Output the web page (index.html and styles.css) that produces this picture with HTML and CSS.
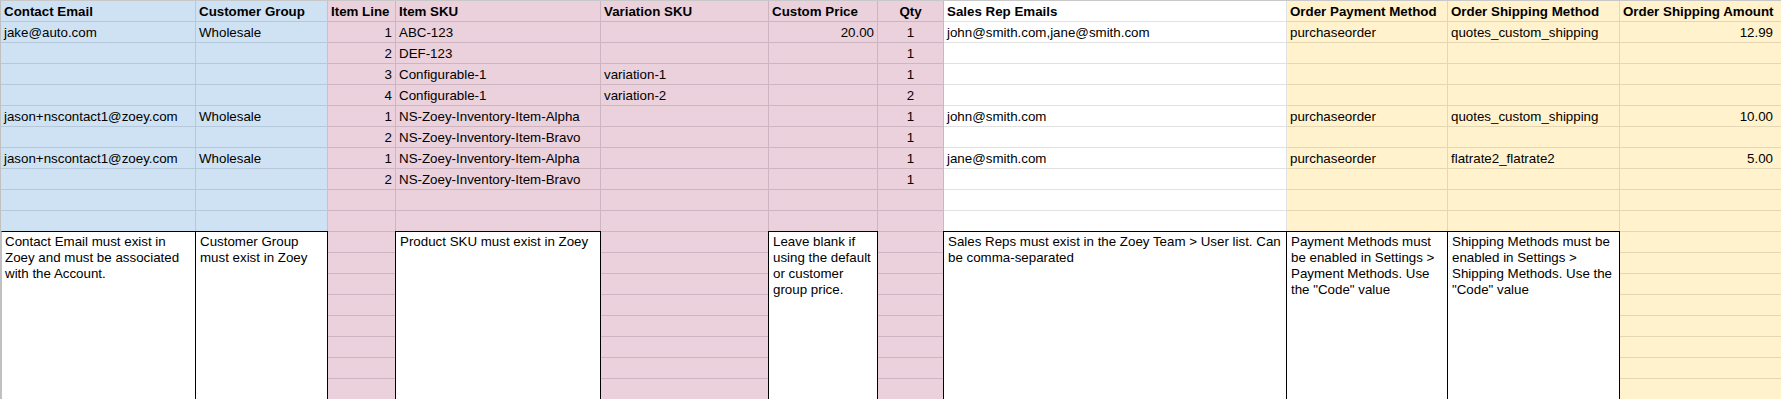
FILE: index.html
```html
<!DOCTYPE html>
<html>
<head>
<meta charset="utf-8">
<title>Order Import Template</title>
<link rel="stylesheet" href="styles.css">
</head>
<body>
<div class="sheet">
  <!-- header -->
  <div class="c b h">Contact Email</div>
  <div class="c b h">Customer Group</div>
  <div class="c p h">Item Line</div>
  <div class="c p h">Item SKU</div>
  <div class="c p h">Variation SKU</div>
  <div class="c p h">Custom Price</div>
  <div class="c p h ctr">Qty</div>
  <div class="c w h">Sales Rep Emails</div>
  <div class="c y h">Order Payment Method</div>
  <div class="c y h">Order Shipping Method</div>
  <div class="c y h">Order Shipping Amount</div>

  <!-- row 1 -->
  <div class="c b">jake@auto.com</div>
  <div class="c b">Wholesale</div>
  <div class="c p r">1</div>
  <div class="c p">ABC-123</div>
  <div class="c p"></div>
  <div class="c p r">20.00</div>
  <div class="c p ctr">1</div>
  <div class="c w">john@smith.com,jane@smith.com</div>
  <div class="c y">purchaseorder</div>
  <div class="c y">quotes_custom_shipping</div>
  <div class="c y r last">12.99</div>

  <!-- row 2 -->
  <div class="c b"></div>
  <div class="c b"></div>
  <div class="c p r">2</div>
  <div class="c p">DEF-123</div>
  <div class="c p"></div>
  <div class="c p"></div>
  <div class="c p ctr">1</div>
  <div class="c w"></div>
  <div class="c y"></div>
  <div class="c y"></div>
  <div class="c y"></div>

  <!-- row 3 -->
  <div class="c b"></div>
  <div class="c b"></div>
  <div class="c p r">3</div>
  <div class="c p">Configurable-1</div>
  <div class="c p">variation-1</div>
  <div class="c p"></div>
  <div class="c p ctr">1</div>
  <div class="c w"></div>
  <div class="c y"></div>
  <div class="c y"></div>
  <div class="c y"></div>

  <!-- row 4 -->
  <div class="c b"></div>
  <div class="c b"></div>
  <div class="c p r">4</div>
  <div class="c p">Configurable-1</div>
  <div class="c p">variation-2</div>
  <div class="c p"></div>
  <div class="c p ctr">2</div>
  <div class="c w"></div>
  <div class="c y"></div>
  <div class="c y"></div>
  <div class="c y"></div>

  <!-- row 5 -->
  <div class="c b">jason+nscontact1@zoey.com</div>
  <div class="c b">Wholesale</div>
  <div class="c p r">1</div>
  <div class="c p">NS-Zoey-Inventory-Item-Alpha</div>
  <div class="c p"></div>
  <div class="c p"></div>
  <div class="c p ctr">1</div>
  <div class="c w">john@smith.com</div>
  <div class="c y">purchaseorder</div>
  <div class="c y">quotes_custom_shipping</div>
  <div class="c y r last">10.00</div>

  <!-- row 6 -->
  <div class="c b"></div>
  <div class="c b"></div>
  <div class="c p r">2</div>
  <div class="c p">NS-Zoey-Inventory-Item-Bravo</div>
  <div class="c p"></div>
  <div class="c p"></div>
  <div class="c p ctr">1</div>
  <div class="c w"></div>
  <div class="c y"></div>
  <div class="c y"></div>
  <div class="c y"></div>

  <!-- row 7 -->
  <div class="c b">jason+nscontact1@zoey.com</div>
  <div class="c b">Wholesale</div>
  <div class="c p r">1</div>
  <div class="c p">NS-Zoey-Inventory-Item-Alpha</div>
  <div class="c p"></div>
  <div class="c p"></div>
  <div class="c p ctr">1</div>
  <div class="c w">jane@smith.com</div>
  <div class="c y">purchaseorder</div>
  <div class="c y">flatrate2_flatrate2</div>
  <div class="c y r last">5.00</div>

  <!-- row 8 -->
  <div class="c b"></div>
  <div class="c b"></div>
  <div class="c p r">2</div>
  <div class="c p">NS-Zoey-Inventory-Item-Bravo</div>
  <div class="c p"></div>
  <div class="c p"></div>
  <div class="c p ctr">1</div>
  <div class="c w"></div>
  <div class="c y"></div>
  <div class="c y"></div>
  <div class="c y"></div>

  <!-- row 9 -->
  <div class="c b"></div>
  <div class="c b"></div>
  <div class="c p"></div>
  <div class="c p"></div>
  <div class="c p"></div>
  <div class="c p"></div>
  <div class="c p"></div>
  <div class="c w"></div>
  <div class="c y"></div>
  <div class="c y"></div>
  <div class="c y"></div>

  <!-- row 10 -->
  <div class="c b"></div>
  <div class="c b"></div>
  <div class="c p"></div>
  <div class="c p"></div>
  <div class="c p"></div>
  <div class="c p"></div>
  <div class="c p"></div>
  <div class="c w"></div>
  <div class="c y"></div>
  <div class="c y"></div>
  <div class="c y"></div>

  <!-- notes (merged cells) -->
  <div class="note note-a first">Contact Email must exist in Zoey and must be associated with the Account.</div>
  <div class="note note-b">Customer Group must exist in Zoey</div>
  <div class="note note-d">Product SKU must exist in Zoey</div>
  <div class="note note-f">Leave blank if using the default or customer group price.</div>
  <div class="note note-h">Sales Reps must exist in the Zoey Team &gt; User list. Can be comma-separated</div>
  <div class="note note-i">Payment Methods must be enabled in Settings &gt; Payment Methods. Use the "Code" value</div>
  <div class="note note-j">Shipping Methods must be enabled in Settings &gt; Shipping Methods. Use the "Code" value</div>

  <!-- filler cells in the notes area: Item Line, Variation SKU, Qty, Amount -->
  <div class="c p"></div><div class="c p"></div><div class="c p"></div><div class="c y"></div>
  <div class="c p"></div><div class="c p"></div><div class="c p"></div><div class="c y"></div>
  <div class="c p"></div><div class="c p"></div><div class="c p"></div><div class="c y"></div>
  <div class="c p"></div><div class="c p"></div><div class="c p"></div><div class="c y"></div>
  <div class="c p"></div><div class="c p"></div><div class="c p"></div><div class="c y"></div>
  <div class="c p"></div><div class="c p"></div><div class="c p"></div><div class="c y"></div>
  <div class="c p"></div><div class="c p"></div><div class="c p"></div><div class="c y"></div>
  <div class="c p"></div><div class="c p"></div><div class="c p"></div><div class="c y"></div>
</div>
</body>
</html>
```

FILE: styles.css
```css
html, body {
  margin: 0;
  padding: 0;
  background: #ffffff;
  overflow: hidden;
}

body {
  width: 1781px;
  height: 399px;
  font-family: "Liberation Sans", Arial, sans-serif;
  font-size: 13.333px;
  color: #000000;
}

.sheet {
  display: grid;
  grid-template-columns: 195px 132px 68px 205px 168px 109px 66px 343px 161px 172px 165px;
  grid-auto-rows: 21px;
  border-top: 1px solid #c8c8c8;
  border-left: 1px solid #c0c0c0;
  width: max-content;
}

.c {
  box-sizing: border-box;
  height: 21px;
  padding: 0 3px;
  line-height: 21px;
  white-space: nowrap;
  border-right: 1px solid;
  border-bottom: 1px solid;
}

.b { background: #cfe2f3; border-color: #b6c9db; }
.p { background: #ead1dc; border-color: #cdb6c1; }
.w { background: #ffffff; border-color: #e2e2e2; }
.y { background: #fff2cc; border-color: #e4d8b4; }

.h { font-weight: bold; }
.r { text-align: right; }
.ctr { text-align: center; }
.last { padding-right: 11px; }

.note {
  position: relative;
  z-index: 1;
  box-sizing: border-box;
  background: #ffffff;
  border: 1px solid #000000;
  margin-top: -1px;
  margin-left: -1px;
  padding: 2px 3px 0 4px;
  line-height: 16px;
  white-space: normal;
  grid-row: 12 / span 8;
}

.note.first {
  margin-left: 0;
  border-left-color: #c0c0c0;
  padding-left: 3px;
}

.note-a { grid-column: 1; }
.note-b { grid-column: 2; }
.note-d { grid-column: 4; }
.note-f { grid-column: 6; }
.note-h { grid-column: 8; }
.note-i { grid-column: 9; }
.note-j { grid-column: 10; }
```
